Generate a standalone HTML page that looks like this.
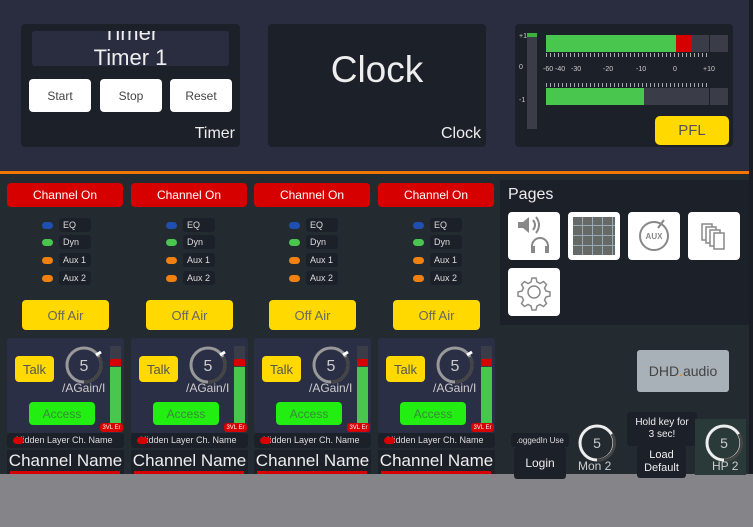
<!DOCTYPE html><html><head><style>
*{margin:0;padding:0;box-sizing:border-box}
body{width:753px;height:527px;overflow:hidden;background:#858488;font-family:"Liberation Sans","DejaVu Sans",sans-serif;position:relative}
.a{position:absolute}
.c{display:flex;align-items:center;justify-content:center}
.btn{background:#fff;border-radius:4px;color:#444;font-size:12px}
.strip{position:absolute;top:180px;width:122px;height:294px}
.pill{position:absolute;left:53px;width:32px;height:14px;background:#1c2129;border-radius:3px;color:#ddd;font-size:9px;line-height:14px;padding-left:4px}
.dot{position:absolute;left:36px;width:11px;height:7px;border-radius:4px}
.pg{position:absolute;width:52px;height:48px;background:#fff;border-radius:4px}
</style></head><body>
<div class="a" style="left:0;top:0;width:753px;height:171px;background:#2a2d40"></div>
<div class="a" style="left:0;top:171px;width:753px;height:3px;background:#f07800"></div>
<div class="a" style="left:0;top:174px;width:753px;height:300px;background:#232b30"></div>
<div class="a" style="left:749px;top:0;width:4px;height:474px;background:#1a1d24"></div>

<!-- Timer -->
<div class="a" style="left:21px;top:24px;width:219px;height:123px;background:#1c2029;border-radius:4px;overflow:hidden">
 <div class="a" style="left:11px;top:7px;width:197px;height:35px;background:#2a2d40;border-radius:3px;overflow:hidden;color:#eee;text-align:center;font-size:22px;line-height:22px">
  <div style="margin-top:-9px">Timer</div><div style="margin-top:3px">Timer 1</div></div>
 <div class="a btn c" style="left:8px;top:55px;width:62px;height:33px">Start</div>
 <div class="a btn c" style="left:79px;top:55px;width:62px;height:33px">Stop</div>
 <div class="a btn c" style="left:149px;top:55px;width:62px;height:33px">Reset</div>
 <div class="a" style="right:5px;bottom:4px;color:#eee;font-size:16px">Timer</div>
</div>
<!-- Clock -->
<div class="a" style="left:268px;top:24px;width:218px;height:123px;background:#1c2029;border-radius:4px">
 <div class="a" style="left:0;width:218px;top:25px;text-align:center;color:#eee;font-size:37px">Clock</div>
 <div class="a" style="right:5px;bottom:4px;color:#eee;font-size:16px">Clock</div>
</div>
<!-- Meter -->
<div class="a" style="left:515px;top:24px;width:218px;height:123px;background:#1c2029;border-radius:4px">
 <div class="a" style="left:12px;top:9px;width:10px;height:96px;background:#3a3d48"></div>
 <div class="a" style="left:12px;top:9px;width:10px;height:4px;background:#3bb03b"></div>
 <div class="a" style="left:4px;top:9px;color:#ccc;font-size:7px">+1</div>
 <div class="a" style="left:4px;top:40px;color:#ccc;font-size:7px">0</div>
 <div class="a" style="left:4px;top:73px;color:#ccc;font-size:7px">-1</div>
 <div class="a" style="left:31px;top:11px;width:130px;height:17px;background:#48c64d"></div>
 <div class="a" style="left:161px;top:11px;width:16px;height:17px;background:#d60000"></div>
 <div class="a" style="left:177px;top:11px;width:17px;height:17px;background:#3a3d48"></div>
 <div class="a" style="left:195px;top:11px;width:18px;height:17px;background:#3a3d48"></div>
 <div class="a" style="left:31px;top:64px;width:98px;height:17px;background:#48c64d"></div>
 <div class="a" style="left:129px;top:64px;width:65px;height:17px;background:#3a3d48"></div>
 <div class="a" style="left:195px;top:64px;width:18px;height:17px;background:#3a3d48"></div>
 <div class="a" style="left:31px;top:29px;width:163px;height:4px;background:repeating-linear-gradient(90deg,#aaa 0 1px,transparent 1px 4px)"></div>
 <div class="a" style="left:31px;top:59px;width:163px;height:4px;background:repeating-linear-gradient(90deg,#aaa 0 1px,transparent 1px 4px)"></div>
 <div class="a" style="left:28px;top:42px;color:#ccc;font-size:7px;width:190px;height:10px">
  <span class="a" style="left:0">-60</span><span class="a" style="left:12px">-40</span><span class="a" style="left:28px">-30</span><span class="a" style="left:60px">-20</span><span class="a" style="left:93px">-10</span><span class="a" style="left:130px">0</span><span class="a" style="left:160px">+10</span></div>
 <div class="a c" style="left:140px;top:92px;width:74px;height:29px;background:#ffd900;border-radius:5px;color:#555;font-size:15px">PFL</div>
</div>

<div id="s"></div>
<script>
var h='';[6,130,253,377].forEach(function(x){
h+='<div class="strip" style="left:'+x+'px">'+
'<div class="a c" style="left:1px;top:3px;width:116px;height:24px;background:#d60000;border-radius:4px;color:#fff;font-size:12px">Channel On</div>'+
'<div class="dot" style="top:42px;background:#1f4fb0"></div><div class="pill" style="top:38px">EQ</div>'+
'<div class="dot" style="top:59px;background:#48c64d"></div><div class="pill" style="top:55px">Dyn</div>'+
'<div class="dot" style="top:77px;background:#f08010"></div><div class="pill" style="top:73px">Aux 1</div>'+
'<div class="dot" style="top:95px;background:#f08010"></div><div class="pill" style="top:91px">Aux 2</div>'+
'<div class="a c" style="left:16px;top:120px;width:87px;height:30px;background:#ffd900;border-radius:4px;color:#666;font-size:13px">Off Air</div>'+
'<div class="a" style="left:1px;top:158px;width:117px;height:95px;background:#2b2f45;border-radius:3px"></div>'+
'<div class="a c" style="left:9px;top:176px;width:39px;height:26px;background:#ffd900;border-radius:4px;color:#555;font-size:13px">Talk</div>'+
'<svg class="a" style="left:57px;top:164px" width="42" height="42" viewBox="0 0 42 42"><circle cx="21" cy="21" r="17" fill="#2b2f45" stroke="#999" stroke-width="3"/><path d="M21 38 A17 17 0 0 0 36 13" fill="none" stroke="#444" stroke-width="3"/><line x1="33" y1="11" x2="38" y2="8" stroke="#fff" stroke-width="3"/><text x="21" y="27" fill="#ccc" font-size="16" text-anchor="middle" font-family="Liberation Sans">5</text></svg>'+
'<div class="a" style="left:56px;top:201px;color:#ccc;font-size:12px">/AGain/I</div>'+
'<div class="a" style="left:104px;top:166px;width:11px;height:80px;background:#3a3d48"></div>'+
'<div class="a" style="left:104px;top:179px;width:11px;height:7px;background:#d60000"></div>'+
'<div class="a" style="left:104px;top:187px;width:11px;height:58px;background:#48c64d"></div>'+
'<div class="a c" style="left:23px;top:222px;width:66px;height:23px;background:#22ee11;border-radius:4px;color:#3a8a3a;font-size:12px">Access</div>'+
'<div class="a c" style="left:94px;top:243px;width:23px;height:9px;background:#d60000;border-radius:3px;color:#fff;font-size:6px">3VL Er</div>'+
'<div class="a" style="left:1px;top:253px;width:117px;height:15px;background:#1c2129;border-radius:3px;color:#ddd;font-size:9px;line-height:15px;padding-left:9px;overflow:hidden;white-space:nowrap">Hidden Layer Ch. Name</div>'+
'<div class="a" style="left:7px;top:257px;width:11px;height:7px;background:#d60000;border-radius:4px"></div>'+
'<div class="a" style="left:1px;top:270px;width:117px;height:24px;background:#1c2129;color:#eee;font-size:17px;line-height:22px;text-align:center;white-space:nowrap;overflow:hidden">Channel Name</div>'+
'<div class="a" style="left:4px;top:291px;width:110px;height:3px;background:#d60000"></div>'+
'</div>';});
document.getElementById('s').innerHTML=h;
</script>

<div class="a" style="left:500px;top:180px;width:249px;height:145px;background:#1c2029"></div>
<div class="a" style="left:508px;top:186px;color:#eee;font-size:16px">Pages</div>
<div class="pg" style="left:508px;top:212px"><svg width="52" height="48"><path d="M10 10h5l6-5v16l-6-5h-5z" fill="#888"/><path d="M25 8q4 5 0 10M28 5q6 8 0 16" stroke="#888" stroke-width="2" fill="none"/><path d="M24 40v-6a8 8 0 0 1 16 0v6" stroke="#888" stroke-width="2" fill="none"/><rect x="23" y="34" width="4" height="7" fill="#888"/><rect x="37" y="34" width="4" height="7" fill="#888"/></svg></div>
<div class="pg" style="left:568px;top:212px;padding:5px"><div style="width:42px;height:38px;background:#666a66;background-image:repeating-linear-gradient(90deg,transparent 0 9px,#9ab 9px 10px),repeating-linear-gradient(0deg,transparent 0 9px,#9ab 9px 10px)"></div></div>
<div class="pg" style="left:628px;top:212px"><svg width="52" height="48"><circle cx="26" cy="24" r="14" fill="none" stroke="#888" stroke-width="2"/><line x1="30" y1="16" x2="36" y2="8" stroke="#888" stroke-width="2"/><text x="26" y="27" font-size="8" fill="#888" text-anchor="middle" font-family="Liberation Sans" font-weight="bold">AUX</text></svg></div>
<div class="pg" style="left:688px;top:212px"><svg width="52" height="48"><g fill="#fff" stroke="#888" stroke-width="1.5"><rect x="14" y="12" width="10" height="16"/><rect x="18" y="15" width="10" height="16"/><rect x="22" y="18" width="10" height="16"/><rect x="26" y="21" width="10" height="16"/></g></svg></div>
<div class="pg" style="left:508px;top:268px"><svg width="52" height="48"><path d="M24 10h4l1 4 3 1.5 3.5-2 3 3-2 3.5 1.5 3 4 1v4l-4 1-1.5 3 2 3.5-3 3-3.5-2-3 1.5-1 4h-4l-1-4-3-1.5-3.5 2-3-3 2-3.5-1.5-3-4-1v-4l4-1 1.5-3-2-3.5 3-3 3.5 2 3-1.5z" fill="none" stroke="#888" stroke-width="1.5"/><circle cx="26" cy="24" r="6" fill="none" stroke="#888" stroke-width="1.5"/></svg></div>
<div class="a c" style="left:637px;top:350px;width:92px;height:42px;background:#a8b0b8;border-radius:3px;color:#444;font-size:14px">DHD<span style="color:#f07800">.</span>audio</div>
<div class="a c" style="left:511px;top:433px;width:58px;height:14px;background:#1c2029;border-radius:3px;color:#ddd;font-size:8px;white-space:nowrap;overflow:hidden">.oggedIn Use</div>
<div class="a c" style="left:514px;top:447px;width:52px;height:32px;background:#1c2029;border-radius:3px;color:#eee;font-size:12px">Login</div>
<svg class="a" style="left:576px;top:422px" width="42" height="42"><circle cx="21" cy="21" r="17" fill="none" stroke="#eee" stroke-width="3"/><path d="M21 38A17 17 0 0 0 36 12" fill="none" stroke="#444" stroke-width="3"/><text x="21" y="26" font-size="14" fill="#ccc" text-anchor="middle" font-family="Liberation Sans">5</text></svg>
<div class="a" style="left:578px;top:459px;color:#ccc;font-size:12px">Mon 2</div>
<div class="a c" style="left:627px;top:412px;width:70px;height:34px;background:#1c2029;border-radius:4px;color:#eee;font-size:10px;text-align:center;line-height:12px">Hold key for<br>3 sec!</div>
<div class="a c" style="left:637px;top:446px;width:49px;height:32px;background:#1c2029;border-radius:3px;color:#eee;font-size:11px;text-align:center;line-height:13px">Load<br>Default</div>
<div class="a" style="left:695px;top:419px;width:51px;height:56px;background:#2a3a38"></div>
<svg class="a" style="left:703px;top:422px" width="42" height="42"><circle cx="21" cy="21" r="17" fill="none" stroke="#eee" stroke-width="3"/><path d="M21 38A17 17 0 0 0 36 12" fill="none" stroke="#444" stroke-width="3"/><text x="21" y="26" font-size="14" fill="#ccc" text-anchor="middle" font-family="Liberation Sans">5</text></svg>
<div class="a" style="left:712px;top:459px;color:#ccc;font-size:12px">HP 2</div>
</body></html>
